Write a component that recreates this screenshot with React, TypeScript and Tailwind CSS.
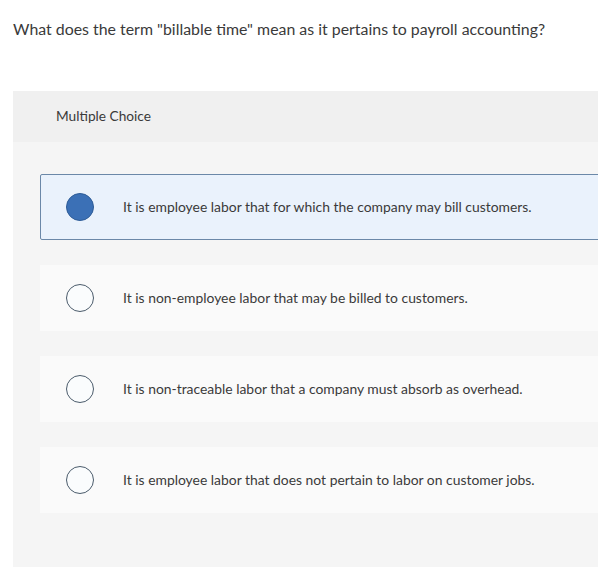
import React from "react";

const options = [
  "It is employee labor that for which the company may bill customers.",
  "It is non-employee labor that may be billed to customers.",
  "It is non-traceable labor that a company must absorb as overhead.",
  "It is employee labor that does not pertain to labor on customer jobs.",
];

export default function App() {
  return (
    <div
      className="w-[598px] h-[575px] bg-white overflow-hidden"
      style={{ fontFamily: '"Lato", "Open Sans", sans-serif' }}
    >
      <div className="pt-[19px] pl-[13px] text-[15.9px] leading-[20px] text-[#3a3a3a]">
        What does the term "billable time" mean as it pertains to payroll accounting?
      </div>
      <div className="mt-[52px] ml-[13px] w-[600px] h-[476px] bg-[#f5f5f5]">
        <div className="h-[51px] bg-[#f0f0f0] pl-[43px] flex items-center text-[13.7px] text-[#3a3a3a]">
          Multiple Choice
        </div>
        <div className="pt-[32px] pl-[27px] flex flex-col gap-[25px]">
          {options.map((t, i) => (
            <div
              key={i}
              className={
                i === 0
                  ? "h-[66px] flex items-center pl-[25px] bg-[#eaf2fc] border border-[#6b88a8] rounded-[2px]"
                  : "h-[66px] flex items-center pl-[26px] bg-[#fafafa]"
              }
            >
              {i === 0 ? (
                <div className="w-[28px] h-[28px] rounded-full bg-[#3b70b6] border border-[#2e5c97]" />
              ) : (
                <div className="w-[28px] h-[28px] rounded-full bg-[#fafcfd] border-[1.5px] border-[#4b5b6b]" />
              )}
              <span className="ml-[29px] text-[13.9px] text-[#3a3a3a]">{t}</span>
            </div>
          ))}
        </div>
      </div>
    </div>
  );
}
